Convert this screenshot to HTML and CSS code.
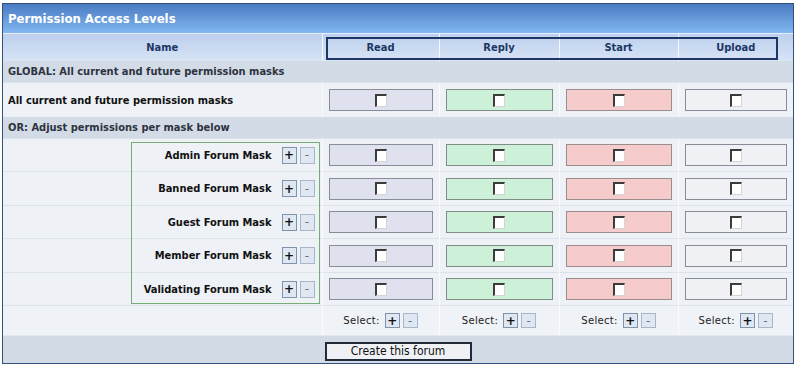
FILE: index.html
```html
<!DOCTYPE html>
<html lang="en">
<head>
    <meta charset="UTF-8">
    <meta name="viewport" content="width=device-width, initial-scale=1.0">
    <title>Permission Access Levels</title>
    <link rel="stylesheet" href="styles.css">
</head>
<body>

<div class="panel">
    <div class="title">Permission Access Levels</div>

    <table class="perms">
        <colgroup>
            <col class="c-name">
            <col class="c-read">
            <col class="c-reply">
            <col class="c-start">
            <col class="c-upload">
        </colgroup>
        <thead>
            <tr>
                <th>Name</th>
                <th>Read</th>
                <th>Reply</th>
                <th>Start</th>
                <th>Upload</th>
            </tr>
        </thead>
        <tbody>
            <tr class="section">
                <td colspan="5">GLOBAL: All current and future permission masks</td>
            </tr>
            <tr class="global">
                <td class="label">All current and future permission masks</td>
                <td><label class="box read"><input type="checkbox" class="chk"></label></td>
                <td><label class="box reply"><input type="checkbox" class="chk"></label></td>
                <td><label class="box start"><input type="checkbox" class="chk"></label></td>
                <td><label class="box upload"><input type="checkbox" class="chk"></label></td>
            </tr>
            <tr class="section">
                <td colspan="5">OR: Adjust permissions per mask below</td>
            </tr>
            <tr class="mask">
                <td><div class="mask-name"><span>Admin Forum Mask</span><span class="pm-group"><button class="pm">+</button><button class="pm minus">-</button></span></div></td>
                <td><label class="box read"><input type="checkbox" class="chk"></label></td>
                <td><label class="box reply"><input type="checkbox" class="chk"></label></td>
                <td><label class="box start"><input type="checkbox" class="chk"></label></td>
                <td><label class="box upload"><input type="checkbox" class="chk"></label></td>
            </tr>
            <tr class="mask tall">
                <td><div class="mask-name"><span>Banned Forum Mask</span><span class="pm-group"><button class="pm">+</button><button class="pm minus">-</button></span></div></td>
                <td><label class="box read"><input type="checkbox" class="chk"></label></td>
                <td><label class="box reply"><input type="checkbox" class="chk"></label></td>
                <td><label class="box start"><input type="checkbox" class="chk"></label></td>
                <td><label class="box upload"><input type="checkbox" class="chk"></label></td>
            </tr>
            <tr class="mask">
                <td><div class="mask-name"><span>Guest Forum Mask</span><span class="pm-group"><button class="pm">+</button><button class="pm minus">-</button></span></div></td>
                <td><label class="box read"><input type="checkbox" class="chk"></label></td>
                <td><label class="box reply"><input type="checkbox" class="chk"></label></td>
                <td><label class="box start"><input type="checkbox" class="chk"></label></td>
                <td><label class="box upload"><input type="checkbox" class="chk"></label></td>
            </tr>
            <tr class="mask tall">
                <td><div class="mask-name"><span>Member Forum Mask</span><span class="pm-group"><button class="pm">+</button><button class="pm minus">-</button></span></div></td>
                <td><label class="box read"><input type="checkbox" class="chk"></label></td>
                <td><label class="box reply"><input type="checkbox" class="chk"></label></td>
                <td><label class="box start"><input type="checkbox" class="chk"></label></td>
                <td><label class="box upload"><input type="checkbox" class="chk"></label></td>
            </tr>
            <tr class="mask">
                <td><div class="mask-name"><span>Validating Forum Mask</span><span class="pm-group"><button class="pm">+</button><button class="pm minus">-</button></span></div></td>
                <td><label class="box read"><input type="checkbox" class="chk"></label></td>
                <td><label class="box reply"><input type="checkbox" class="chk"></label></td>
                <td><label class="box start"><input type="checkbox" class="chk"></label></td>
                <td><label class="box upload"><input type="checkbox" class="chk"></label></td>
            </tr>
            <tr class="select">
                <td></td>
                <td><div class="sel">Select: <span class="pm-group"><button class="pm">+</button><button class="pm minus">-</button></span></div></td>
                <td><div class="sel">Select: <span class="pm-group"><button class="pm">+</button><button class="pm minus">-</button></span></div></td>
                <td><div class="sel">Select: <span class="pm-group"><button class="pm">+</button><button class="pm minus">-</button></span></div></td>
                <td><div class="sel">Select: <span class="pm-group"><button class="pm">+</button><button class="pm minus">-</button></span></div></td>
            </tr>
        </tbody>
    </table>

    <div class="footer">
        <button class="create">Create this forum</button>
    </div>

    <div class="col-focus"></div>
    <div class="mask-outline"></div>
</div>

</body>
</html>
```

FILE: styles.css
```css
body {
    margin: 0;
    padding: 0;
    background-color: #ffffff;
    font-family: "DejaVu Sans Condensed", "DejaVu Sans", sans-serif;
}
.panel {
    position: relative;
    width: 792px;
    margin: 3px 0 0 2px;
    border: 1px solid #34507c;
    box-sizing: border-box;
    background-color: #eef1f6;
}
.title {
    height: 29px;
    line-height: 30px;
    padding-left: 5px;
    border-bottom: 1px solid #e6eefa;
    color: #ffffff;
    font-size: 13px;
    font-weight: bold;
    background: linear-gradient(#4a7bc3, #82b7ef);
}
.perms {
    width: 100%;
    border-collapse: collapse;
    table-layout: fixed;
    font-size: 11px;
}
.c-name { width: 319px; }
.c-read { width: 117px; }
.c-reply { width: 120px; }
.c-start { width: 119px; }
.c-upload { width: 115px; }

.perms th {
    height: 27px;
    padding: 0;
    color: #1c3764;
    font-weight: bold;
    background: linear-gradient(#bccfed, #d8e4f5);
    border-left: 1px solid #f4f8fd;
}
.perms th:first-child {
    border-left: none;
}
.perms td {
    padding: 0 6px;
    border-left: 1px solid #fafbfd;
    border-top: 1px solid #dde2ea;
}
.perms td:first-child {
    border-left: none;
}
.section td {
    height: 21px;
    padding-left: 5px;
    color: #2d3340;
    font-weight: bold;
    background-color: #d3dbe7;
    border-top: none;
}
.global td {
    height: 34px;
}
.global .label {
    padding-left: 5px;
    color: #111111;
    font-weight: bold;
}
.mask td {
    height: 32px;
}
.mask.tall td {
    height: 33px;
}
.mask-name {
    display: flex;
    align-items: center;
    justify-content: flex-end;
    gap: 10px;
    padding-right: 1px;
    color: #111111;
    font-weight: bold;
}
.pm-group {
    display: inline-flex;
    gap: 3px;
}
.pm {
    width: 15px;
    height: 17px;
    padding: 0;
    border: 1px solid #8093ad;
    background-color: #dfe7f2;
    color: #111111;
    font-family: "DejaVu Sans", sans-serif;
    font-size: 12px;
    font-weight: bold;
    line-height: 14px;
}
.pm.minus {
    color: #6a7282;
    font-weight: normal;
    border-color: #a9b6c8;
}
.box {
    display: flex;
    align-items: center;
    justify-content: center;
    height: 22px;
    border: 1px solid #878d97;
    box-sizing: border-box;
}
.box.read { background-color: #dfe2ee; }
.box.reply { background-color: #cdf0d8; border-color: #7f8f85; }
.box.start { background-color: #f5cbcb; border-color: #9a8c8c; }
.box.upload { background-color: #f0f1f4; }
.chk {
    appearance: none;
    width: 12px;
    height: 13px;
    margin: 0;
    box-sizing: border-box;
    background-color: #ffffff;
    border-top: 2px solid #3c3c3c;
    border-left: 2px solid #3c3c3c;
    border-right: 1px solid #d4d4d4;
    border-bottom: 1px solid #d4d4d4;
}
.select td {
    height: 29px;
    background-color: #eff2f7;
}
.sel {
    display: flex;
    align-items: center;
    justify-content: center;
    gap: 5px;
    font-family: "DejaVu Sans", sans-serif;
    font-size: 10px;
    letter-spacing: 0.3px;
    color: #222222;
}
.sel .pm {
    height: 15px;
    line-height: 12px;
}
.footer {
    height: 28px;
    padding-top: 4px;
    box-sizing: border-box;
    text-align: center;
    background-color: #d3dbe7;
    border-top: 1px solid #e3e8ef;
}
.create {
    width: 147px;
    height: 19px;
    padding: 0;
    border: 2px solid #222b3a;
    background-color: #eff1f5;
    color: #111111;
    font-family: "DejaVu Sans Condensed", "DejaVu Sans", sans-serif;
    font-size: 12px;
}
.col-focus {
    position: absolute;
    left: 323px;
    top: 33px;
    width: 452px;
    height: 23px;
    border: 2px solid #1f3566;
    box-sizing: border-box;
    pointer-events: none;
}
.mask-outline {
    position: absolute;
    left: 128px;
    top: 138px;
    width: 189px;
    height: 162px;
    border: 1px solid #74ae74;
    box-sizing: border-box;
    pointer-events: none;
}
```
